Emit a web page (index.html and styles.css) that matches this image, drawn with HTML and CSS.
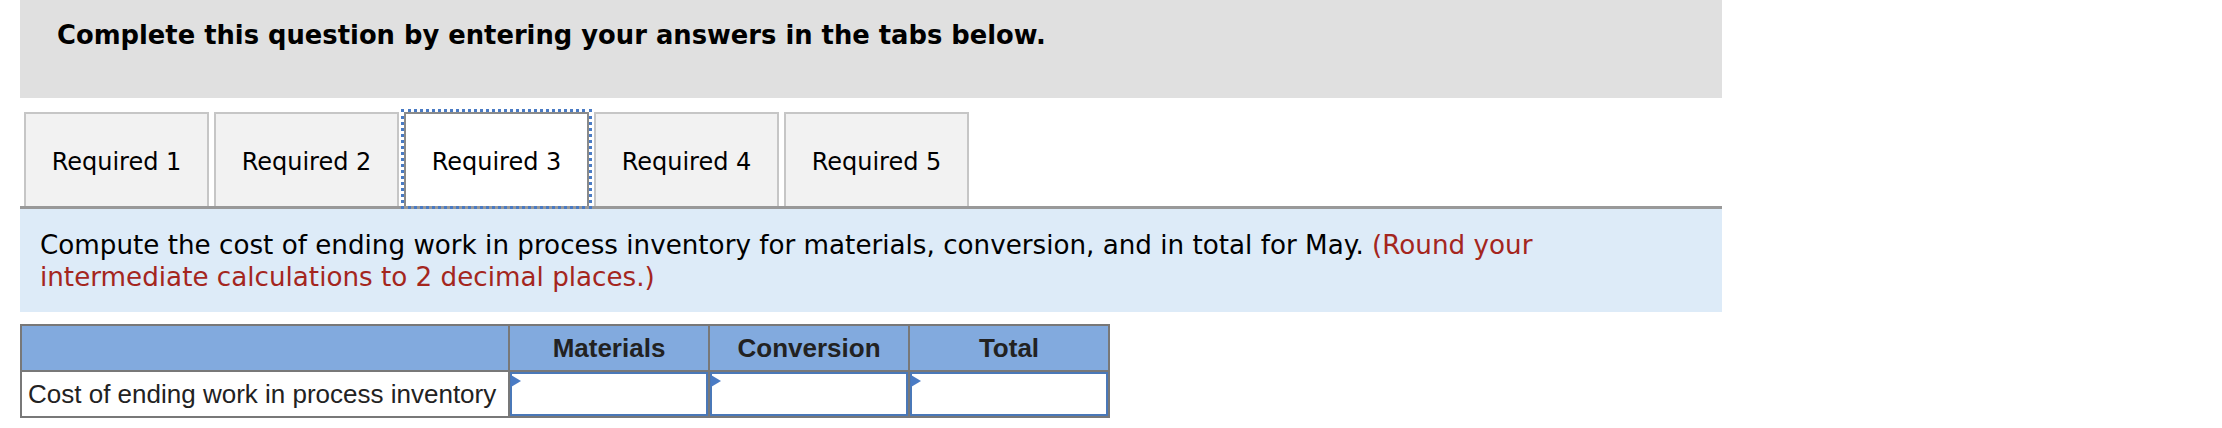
FILE: index.html
```html
<!DOCTYPE html>
<html lang="en">
<head>
  <title>Required 3</title>
  <link rel="stylesheet" href="styles.css">
</head>
<body>
  <div class="question">
    <div class="instructions">Complete this question by entering your answers in the tabs below.</div>

    <div class="tabs">
      <button class="tab">Required 1</button>
      <button class="tab">Required 2</button>
      <button class="tab active">Required 3</button>
      <button class="tab">Required 4</button>
      <button class="tab">Required 5</button>
    </div>

    <div class="prompt">
      Compute the cost of ending work in process inventory for materials, conversion, and in total for May.
      <span class="hint">(Round your intermediate calculations to 2 decimal places.)</span>
    </div>

    <table class="answers">
      <colgroup>
        <col class="label-col">
        <col class="num-col">
        <col class="num-col">
        <col class="num-col">
      </colgroup>
      <tr>
        <th></th>
        <th>Materials</th>
        <th>Conversion</th>
        <th>Total</th>
      </tr>
      <tr>
        <td class="label">Cost of ending work in process inventory</td>
        <td class="cell"><span class="flag"></span><input type="text"></td>
        <td class="cell"><span class="flag"></span><input type="text"></td>
        <td class="cell"><span class="flag"></span><input type="text"></td>
      </tr>
    </table>
  </div>
</body>
</html>
```

FILE: styles.css
```css
body {
  margin: 0;
  background: #fff;
  font-family: Verdana, "DejaVu Sans", sans-serif;
  color: #000;
}

.question {
  margin-left: 20px;
  width: 1702px;
}

.instructions {
  background: #e0e0e0;
  height: 98px;
  box-sizing: border-box;
  padding: 20px 37px 0;
  font-size: 25.8px;
  font-weight: bold;
}

.tabs {
  display: flex;
  gap: 5px;
  margin-top: 14px;
  padding-left: 4px;
  border-bottom: 3px solid #999;
}

.tab {
  width: 185px;
  height: 94px;
  padding: 3px 0 0;
  background: #f2f2f2;
  border: 2px solid #c6c6c6;
  border-bottom: none;
  font-family: Verdana, "DejaVu Sans", sans-serif;
  font-size: 24px;
  color: #000;
  cursor: pointer;
}

.tab.active {
  background: #fff;
  border-color: #8a8a8a;
  outline: 3px dotted #4a7bc4;
  position: relative;
}

.prompt {
  background: #ddebf8;
  padding: 20px 20px 19px;
  font-size: 26.2px;
  line-height: 32px;
}

.hint {
  color: #a4261e;
}

.answers {
  margin-top: 12px;
  border-collapse: collapse;
  table-layout: fixed;
  width: 1088px;
  font-family: Arial, "Liberation Sans", sans-serif;
  font-size: 26px;
  color: #222;
}

.label-col {
  width: 488px;
}

.num-col {
  width: 200px;
}

.answers th,
.answers td {
  border: 2px solid #787878;
  padding: 0;
}

.answers th {
  background: #82aade;
  height: 44px;
  font-weight: bold;
  text-align: center;
}

.answers td {
  height: 44px;
}

.label {
  padding-left: 6px !important;
  white-space: nowrap;
  background: #fff;
}

.cell {
  position: relative;
}

.cell input {
  display: block;
  width: 100%;
  height: 44px;
  box-sizing: border-box;
  margin: 0;
  border: 2px solid #4a78b8;
  background: #fff;
}

.flag {
  position: absolute;
  top: 3px;
  left: 1px;
  width: 0;
  height: 0;
  border-top: 6px solid transparent;
  border-bottom: 6px solid transparent;
  border-left: 10px solid #4a7bc4;
}
```
